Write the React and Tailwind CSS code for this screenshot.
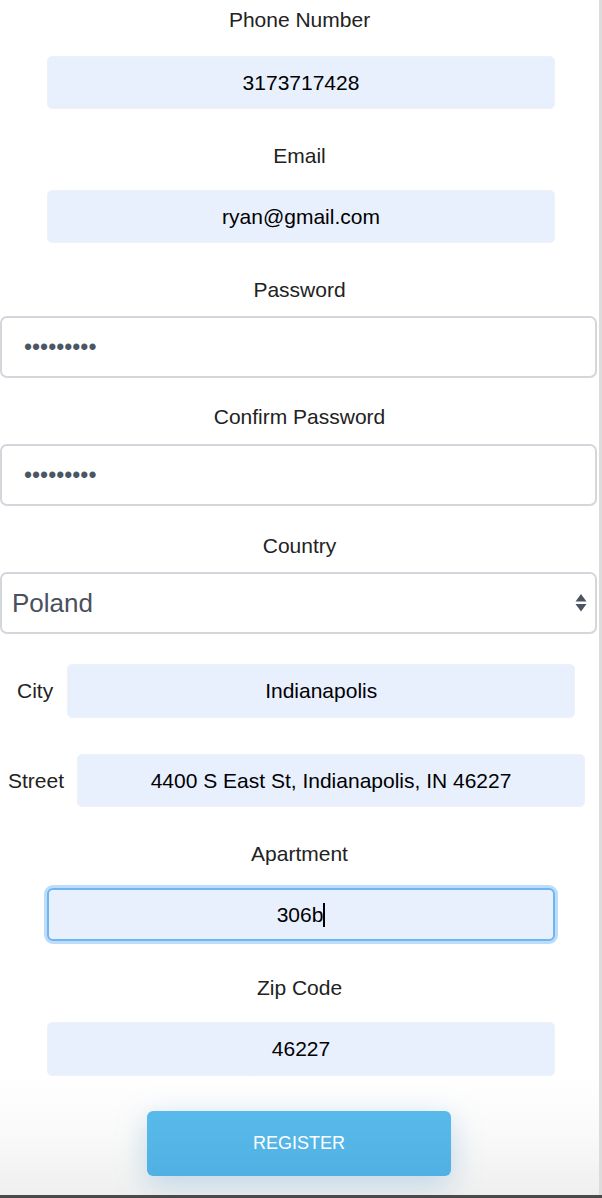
import React from "react";

/* Registration form, lower half (contact + address + submit). */

const font = { fontFamily: '"Liberation Sans", Arial, Helvetica, sans-serif' };

const Label = ({ children, className = "" }) =>
  <div className={"text-center text-[21px] leading-[24px] text-[#222]" + " " + className}>{children}</div>;

const Filled = ({ value, className = "" }) =>
  <input
    readOnly
    value={value}
    className={"block w-[508px] h-[53px] rounded-[5px] border border-[#eef1f6] bg-[#e8f0fe] text-center text-[21px] text-black outline-none " + className}
    style={font} />;

const Secret = ({ value, className = "" }) =>
  <input
    readOnly
    type="password"
    value={value}
    className={"block w-[597px] h-[62px] rounded-[7px] border-2 border-[#d3d7dc] bg-white pl-[22px] text-[23px] text-[#4b5563] outline-none " + className}
    style={font} />;

const SortArrows = () =>
  <svg width="12" height="20" viewBox="0 0 12 20" className="shrink-0">
    <path d="M6 1 L11.5 8.5 H0.5 Z" fill="#4b5563" />
    <path d="M0.5 11 H11.5 L6 18.5 Z" fill="#4b5563" />
  </svg>;

export default function App() {
  return (
    <div className="flex w-[602px] h-[1198px] flex-col" style={font}>
      <div className="flex flex-1">
        <main className="w-[599px] bg-[linear-gradient(to_bottom,#ffffff_0%,#ffffff_90%,#f9f9f9_95%,#efefef_100%)]">
          <Label className="pt-[8px]">Phone Number</Label>
          <Filled value="3173717428" className="mt-[24px] ml-[47px] h-[52px]" />

          <Label className="mt-[35px]">Email</Label>
          <Filled value="ryan@gmail.com" className="mt-[22px] ml-[47px]" />

          <Label className="mt-[35px]">Password</Label>
          <Secret value="ryan12345" className="mt-[14px]" />

          <Label className="mt-[27px]">Confirm Password</Label>
          <Secret value="ryan12345" className="mt-[15px]" />

          <Label className="mt-[28px]">Country</Label>
          <div className="mt-[14px] flex h-[62px] w-[597px] items-center justify-between rounded-[7px] border-2 border-[#d3d7dc] bg-white pl-[10px] pr-[8px]">
            <span className="text-[26px] text-[#4a505c]">Poland</span>
            <SortArrows />
          </div>

          <div className="mt-[30px] flex items-center gap-[14px] pl-[17px]">
            <span className="text-[21px] text-[#222]">City</span>
            <Filled value="Indianapolis" className="h-[54px]" />
          </div>

          <div className="mt-[36px] flex items-center gap-[13px] pl-[8px]">
            <span className="text-[21px] text-[#222]">Street</span>
            <Filled value="4400 S East St, Indianapolis, IN 46227" />
          </div>

          <Label className="mt-[35px]">Apartment</Label>
          <div className="mt-[22px] ml-[47px] flex h-[53px] w-[508px] items-center justify-center rounded-[6px] border-2 border-[#6fb6f0] bg-[#e8f0fe] text-[21px] text-black shadow-[0_0_0_3px_#bddcfb]">
            <span>306b</span>
            <span className="h-[24px] w-[2px] bg-black" />
          </div>

          <Label className="mt-[35px]">Zip Code</Label>
          <Filled value="46227" className="mt-[22px] ml-[47px] h-[54px]" />

          <div className="mt-[35px] flex justify-center pr-[1px]">
            <button className="h-[65px] w-[304px] rounded-[6px] bg-[linear-gradient(to_bottom,#58baeb,#51b0e3)] text-[18px] text-white shadow-[0_8px_30px_rgba(90,160,205,0.35)]">
              REGISTER
            </button>
          </div>
        </main>
        <div className="w-[3px] bg-[#dcdcdc]" />
      </div>
      <div className="h-[3px] bg-[#4a4a4a]" />
    </div>
  );
}
